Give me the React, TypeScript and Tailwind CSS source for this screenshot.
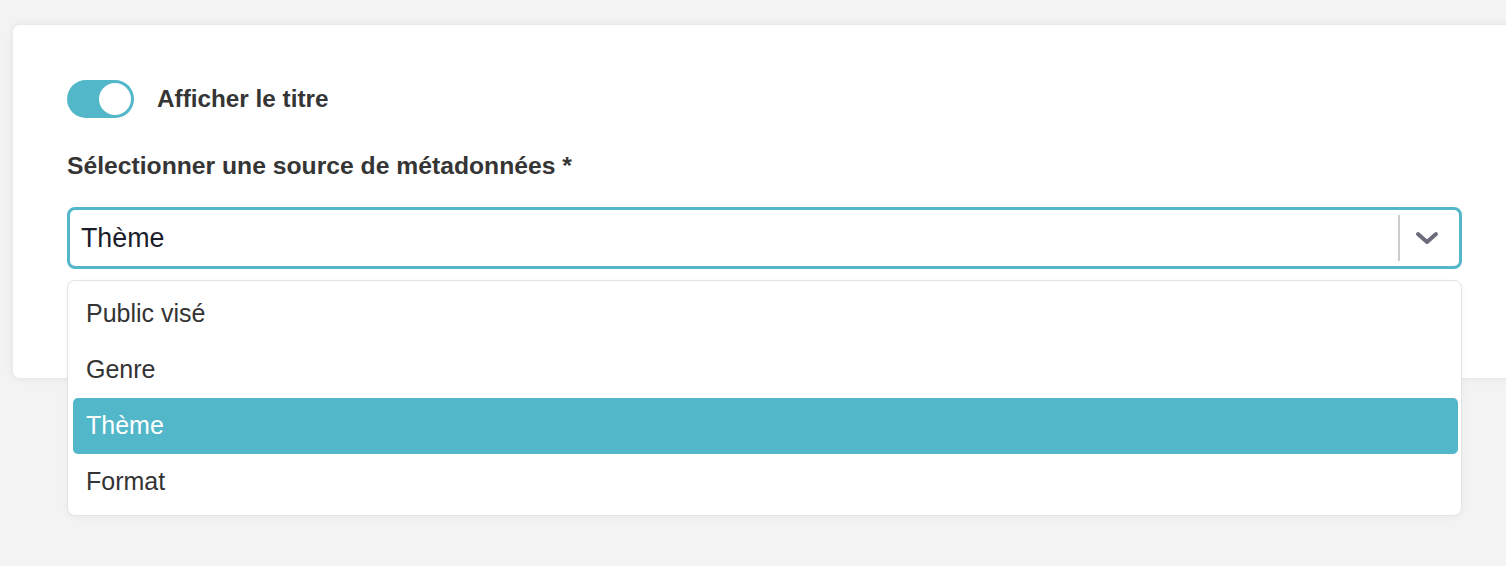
import { useState } from 'react';

const options = ['Public visé', 'Genre', 'Thème', 'Format'];

const Toggle = ({ on }: { on: boolean }) => (
  <div
    className={
      on
        ? 'flex h-[38px] w-[67px] items-center justify-end rounded-full bg-[#52b7c9] p-[3px]'
        : 'flex h-[38px] w-[67px] items-center justify-start rounded-full bg-[#d4d4d4] p-[3px]'
    }
  >
    <div className="h-[32px] w-[32px] rounded-full bg-white" />
  </div>
);

const Chevron = () => (
  <svg width="24" height="14" viewBox="0 0 24 14" fill="none">
    <path d="M3 3 L12 11 L21 3" stroke="#6b6d7c" strokeWidth="4" strokeLinecap="round" strokeLinejoin="round" />
  </svg>
);

export default function App() {
  const [selected] = useState('Thème');

  return (
    <div
      className="h-[566px] overflow-hidden bg-[#f3f3f3] pl-[13px] pt-[25px]"
      style={{ fontFamily: '"Liberation Sans", Arial, sans-serif' }}
    >
      <div className="h-[353px] w-[1510px] rounded-[7px] bg-white pl-[54px] pt-[55px] shadow-[0_0_8px_rgba(0,0,0,0.08)]">
        <div className="flex items-center gap-[23px]">
          <Toggle on />
          <span className="text-[24.3px] font-bold text-[#353535]">Afficher le titre</span>
        </div>

        <div className="mt-[33px] text-[24.7px] font-bold leading-[30px] text-[#353535]">
          Sélectionner une source de métadonnées *
        </div>

        <div className="relative mt-[26px] w-[1395px]">
          <div className="flex h-[62px] items-center rounded-[8px] border-[3px] border-[#52b7c9] bg-white">
            <span className="flex-1 pl-[11px] text-[26.8px] text-[#1b1d2b]">{selected}</span>
            <div className="h-[46px] w-[2px] bg-[#cccccc]" />
            <div className="flex w-[59px] items-center justify-center pr-[5px]">
              <Chevron />
            </div>
          </div>

          <div className="absolute left-0 top-[73px] w-full rounded-[8px] border border-[#e3e3e3] bg-white py-[5px] pl-[5px] pr-[3px] shadow-[0_2px_6px_rgba(0,0,0,0.04)]">
            {options.map((opt) => (
              <div
                key={opt}
                className={
                  opt === selected
                    ? 'flex h-[56px] items-center rounded-[5px] bg-[#52b7c9] pl-[13px] text-[25px] text-white'
                    : 'flex h-[56px] items-center rounded-[5px] pl-[13px] text-[25px] text-[#333333]'
                }
              >
                {opt}
              </div>
            ))}
          </div>
        </div>
      </div>
    </div>
  );
}
